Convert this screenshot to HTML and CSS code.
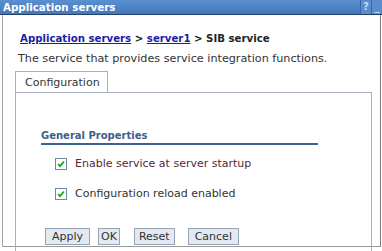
FILE: index.html
```html
<!DOCTYPE html>
<html lang="en">
<head>
  <meta charset="UTF-8">
  <title>Application servers</title>
  <link rel="stylesheet" href="styles.css">
</head>
<body>
  <div class="portlet">
    <div class="titlebar">
      <span class="title">Application servers</span>
      <span class="tool">?</span>
      <span class="tool">_</span>
    </div>

    <div class="portlet-body">
      <div class="crumbs">
        <a href="#">Application servers</a> &gt; <a href="#">server1</a> &gt; SIB service
      </div>
      <div class="desc">The service that provides service integration functions.</div>

      <div class="tabs">
        <div class="tab">Configuration</div>
      </div>

      <div class="panel">
        <div class="section-head">General Properties</div>

        <label class="check-row">
          <span class="check">
            <svg width="8" height="8" viewBox="0 0 8 8"><path d="M1 4 L3 6.2 L7 1.5" fill="none" stroke="#22a022" stroke-width="1.8"/></svg>
          </span>
          <span class="first">Enable service at server startup</span>
        </label>

        <label class="check-row">
          <span class="check">
            <svg width="8" height="8" viewBox="0 0 8 8"><path d="M1 4 L3 6.2 L7 1.5" fill="none" stroke="#22a022" stroke-width="1.8"/></svg>
          </span>
          <span>Configuration reload enabled</span>
        </label>

        <div class="buttons">
          <button class="button btn-apply">Apply</button>
          <button class="button btn-ok">OK</button>
          <button class="button btn-reset">Reset</button>
          <button class="button btn-cancel">Cancel</button>
        </div>
      </div>
    </div>
  </div>
</body>
</html>
```

FILE: styles.css
```css
body {
  margin: 0;
  font-family: 'DejaVu Sans', Verdana, sans-serif;
  font-size: 11px;
  line-height: 13px;
  color: #333;
  background: #fff;
}

.portlet {
  width: 382px;
  height: 251px;
  overflow: hidden;
}

.titlebar {
  display: flex;
  align-items: center;
  height: 14px;
  background: linear-gradient(#5a8fd0, #4478bd);
  border-bottom: 1px solid #24406a;
}

.title {
  flex: 1;
  padding-left: 3px;
  color: #fff;
  font-weight: bold;
  font-size: 10.3px;
}

.tool {
  width: 10px;
  height: 14px;
  line-height: 13px;
  text-align: center;
  color: #c8dcf4;
  font-weight: bold;
  font-size: 10px;
  border-left: 1px solid #3a66a4;
  background: #5b8ccb;
}

.portlet-body {
  margin: 0 1px 0 2px;
  height: 231px;
  border-left: 1px solid #a6a6a6;
  border-right: 1px solid #7a7a7a;
  border-bottom: 1px solid #9a9a9a;
  padding: 0 8px 0 12px;
}

.crumbs {
  padding: 17px 0 0 5px;
  font-size: 10.2px;
  font-weight: bold;
  color: #222;
}

.crumbs a {
  color: #1c1ca8;
}

.desc {
  margin-top: 7px;
  padding-left: 3px;
  font-size: 11.2px;
}

.tabs {
  display: flex;
  margin-top: 6px;
}

.tab {
  width: 82px;
  height: 21px;
  line-height: 22px;
  padding-left: 9px;
  border: 1px solid #a9b0c4;
  border-bottom: none;
}

.panel {
  height: 160px;
  border: 1px solid #a9b0c4;
  border-bottom: none;
  margin-top: -1px;
  padding: 36px 0 0 25px;
}

.section-head {
  width: 277px;
  font-size: 10px;
  font-weight: bold;
  color: #3b5f8c;
  padding-bottom: 1px;
  border-bottom: 2px solid #3d6290;
}

.check-row {
  display: flex;
  align-items: center;
  gap: 8px;
  margin: 12px 0 0 14px;
}

.check-row + .check-row {
  margin-top: 17px;
}

.check {
  display: flex;
  align-items: center;
  justify-content: center;
  width: 10px;
  height: 10px;
  border: 1px solid #6f8aa8;
  background: #fff;
}

.first {
  color: #53283a;
}

.buttons {
  display: flex;
  gap: 7px;
  margin: 28px 0 0 4px;
}

.button {
  height: 17px;
  padding: 0 6px;
  font-family: 'DejaVu Sans', Verdana, sans-serif;
  font-size: 11px;
  color: #333;
  background: #e3e9f1;
  border: 1px solid #96a3b6;
}

.btn-ok {
  padding: 0 2px;
  margin-left: 1px;
}

.btn-reset {
  padding: 0 4px;
  margin-left: 7px;
}

.btn-cancel {
  margin-left: 6px;
}
```
